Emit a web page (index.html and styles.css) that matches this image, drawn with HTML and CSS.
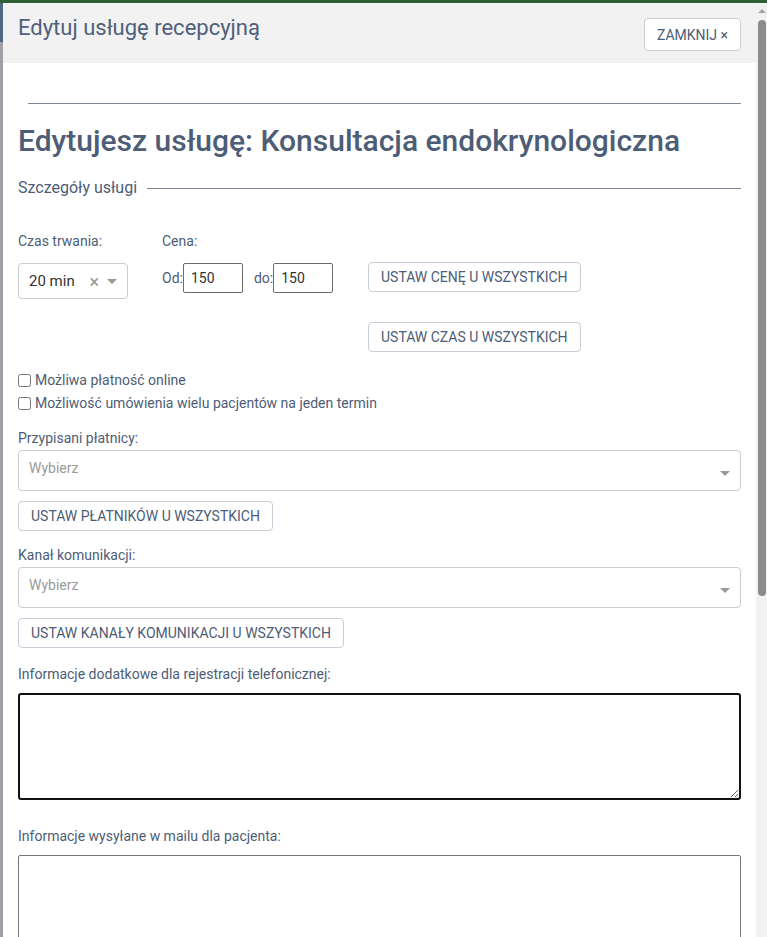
FILE: index.html
```html
<!DOCTYPE html>
<html lang="pl">
<head>
<meta charset="utf-8">
<link rel="stylesheet" href="styles.css">
</head>
<body>
<div class="topbar"></div>
<div class="frame">
  <div class="strip"><div class="strip-top"></div></div>
  <div class="modal">
    <div class="modal-header">
      <div class="modal-title">Edytuj usługę recepcyjną</div>
      <button class="btn btn-close">ZAMKNIJ ×</button>
    </div>
    <div class="modal-body">
      <hr class="rule">
      <h1 class="heading">Edytujesz usługę: Konsultacja endokrynologiczna</h1>
      <div class="legend"><span>Szczegóły usługi</span><div class="legend-line"></div></div>

      <div class="row-top">
        <div class="col-time">
          <div class="label">Czas trwania:</div>
          <div class="select-small">
            <span class="sel-value">20 min</span>
            <span class="sel-clear">×</span>
            <span class="caret"></span>
          </div>
        </div>
        <div class="col-price">
          <div class="label">Cena:</div>
          <div class="price-inputs">
            <span class="pl">Od:</span><input class="num" value="150">
            <span class="pl pl-do">do:</span><input class="num" value="150">
          </div>
        </div>
        <div class="col-btns">
          <button class="btn">USTAW CENĘ U WSZYSTKICH</button>
          <button class="btn">USTAW CZAS U WSZYSTKICH</button>
        </div>
      </div>

      <div class="checks">
        <label class="check"><input type="checkbox"><span>Możliwa płatność online</span></label>
        <label class="check"><input type="checkbox"><span>Możliwość umówienia wielu pacjentów na jeden termin</span></label>
      </div>

      <div class="label lbl-payers">Przypisani płatnicy:</div>
      <div class="select-wide"><span class="placeholder">Wybierz</span><span class="caret"></span></div>
      <button class="btn btn-block">USTAW PŁATNIKÓW U WSZYSTKICH</button>

      <div class="label lbl-channel">Kanał komunikacji:</div>
      <div class="select-wide"><span class="placeholder">Wybierz</span><span class="caret"></span></div>
      <button class="btn btn-block">USTAW KANAŁY KOMUNIKACJI U WSZYSTKICH</button>

      <div class="label lbl-info">Informacje dodatkowe dla rejestracji telefonicznej:</div>
      <textarea class="ta ta-focus"></textarea>

      <div class="label lbl-mail">Informacje wysyłane w mailu dla pacjenta:</div>
      <textarea class="ta ta-mail"></textarea>
    </div>
  </div>
  <div class="scrollbar">
    <div class="sb-arrow"></div>
    <div class="sb-thumb"></div>
  </div>
</div>
</body>
</html>
```
FILE: styles.css
```css
* { box-sizing: border-box; }
html, body { margin: 0; padding: 0; height: 100%; overflow: hidden; background: #fff; }
body { font-family: Roboto, "Liberation Sans", sans-serif; color: #4d5d76; }

.topbar { height: 3px; background: #2f5f35; }
.frame { display: flex; height: 934px; overflow: hidden; }
.strip { width: 3px; background: #a29fa6; flex: none; }
.strip-top { height: 39px; background: #4f6684; }

.modal { flex: 1; min-width: 0; background: #fff; overflow: hidden; }
.modal-header {
  height: 60px; background: #f2f2f2;
  display: flex; align-items: flex-start; justify-content: space-between;
  padding: 0 15px 0 15px;
}
.modal-title { font-size: 22px; line-height: 26px; padding-top: 12px; color: #4f6079; }

.btn {
  font-family: Roboto, "Liberation Sans", sans-serif;
  font-size: 14px; color: #4d5d76; background: #fff;
  border: 1px solid #c9ced8; border-radius: 4px;
  height: 30px; padding: 0 12px; cursor: pointer; white-space: nowrap;
}
.btn-close { height: 33px; margin-top: 15px; padding: 0 12px; }

.modal-body { padding: 0 15px; }
.rule { border: 0; border-top: 1px solid #7d8796; margin: 40px 0 0 10px; height: 0; }
.heading { font-size: 30px; font-weight: 500; margin: 20px 0 0; line-height: 34px; color: #4d5d76; }
.legend { display: flex; align-items: center; margin-top: 20px; font-size: 16px; line-height: 20px; }
.legend-line { flex: 1; border-top: 1px solid #7d8796; margin-left: 10px; }

.label { font-size: 14px; line-height: 18px; }
.row-top { display: flex; margin-top: 34px; }
.col-time { width: 144px; }
.col-price { width: 206px; }
.col-btns { display: flex; flex-direction: column; gap: 30px; padding-top: 30px; }

.select-small {
  margin-top: 13px; width: 110px; height: 36px;
  border: 1px solid #cccccc; border-radius: 4px;
  display: flex; align-items: center; padding-left: 10px;
}
.sel-value { font-size: 15px; color: #333; flex: 1; }
.sel-clear { color: #999; font-size: 18px; margin-right: 8px; }
.caret {
  width: 0; height: 0; border-left: 5px solid transparent; border-right: 5px solid transparent;
  border-top: 5px solid #999; margin-right: 10px;
}

.price-inputs { display: flex; align-items: center; margin-top: 13px; height: 30px; font-size: 14px; }
.pl { color: #4d5d76; }
.pl-do { margin-left: 11px; }
.num {
  width: 60px; height: 30px; border: 1px solid #6b6b6b; border-radius: 2px;
  font-family: Roboto, "Liberation Sans", sans-serif; font-size: 14px; color: #333;
  padding: 0 7px; margin: 0;
}

.checks { margin-top: 19px; display: flex; flex-direction: column; gap: 5px; }
.check { display: flex; align-items: center; font-size: 14px; line-height: 18px; }
.check input { margin: 0 4px 0 0; width: 13px; height: 13px; }

.lbl-payers { margin-top: 17px; }
.select-wide {
  margin-top: 3px; height: 41px; border: 1px solid #cccccc; border-radius: 4px;
  display: flex; align-items: center; justify-content: space-between; padding: 0 0 5px 10px;
}
.placeholder { font-size: 14px; color: #9a9a9a; }
.select-wide .caret { margin-right: 10px; margin-top: 10px; }
.btn-block { display: block; margin-top: 10px; }

.lbl-channel { margin-top: 15px; }
.lbl-info { margin-top: 17px; }
.ta {
  display: block; width: 100%; margin: 10px 0 0; resize: vertical;
  font-family: Roboto, "Liberation Sans", sans-serif;
}
.ta-focus { height: 107px; border: 2px solid #111; border-radius: 3px; }
.lbl-mail { margin-top: 27px; }
.ta-mail { height: 120px; border: 1px solid #767676; border-radius: 2px; }

.scrollbar { width: 11px; flex: none; background: #f1f1f1; display: flex; flex-direction: column; align-items: center; }
.sb-arrow {
  margin-top: 6px; width: 0; height: 0;
  border-left: 4px solid transparent; border-right: 4px solid transparent; border-bottom: 4px solid #a3a3a3;
}
.sb-thumb { margin-top: 7px; width: 8px; height: 576px; background: #8c8c8c; border-radius: 4px; }
```
